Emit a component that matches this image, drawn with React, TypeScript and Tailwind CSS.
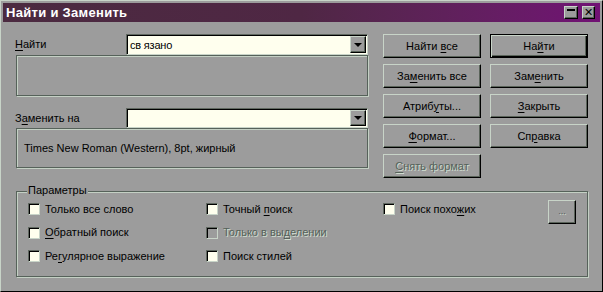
import React from "react";

// Classic "Find & Replace" dialog
const raised =
  "border-t border-l border-t-[#c8d4c8] border-l-[#c8d4c8] border-b border-r border-b-black border-r-black shadow-[inset_-1px_-1px_0_#5a645a]";
const disabledText = "text-[#56625a] [text-shadow:1px_1px_0_#d0dcd0]";

const U = ({ children }: { children: React.ReactNode }) => (
  <span className="underline underline-offset-[2px] decoration-1">{children}</span>
);

const Btn = ({ children, def, disabled }: {
  children: React.ReactNode;
  def?: boolean;
  disabled?: boolean;
}) => (
  <div
    className={`h-[24px] w-[98px] flex items-center justify-center text-[11px] ${
      def
        ? "border border-black shadow-[inset_1px_1px_0_#c8d4c8,inset_-1px_-1px_0_#000,inset_-2px_-2px_0_#5a645a]"
        : raised
    } ${disabled ? disabledText : "text-black"}`}
  >
    <span>{children}</span>
  </div>
);

const Combo = ({ value, h }: { value: string; h: string }) => (
  <div
    className={`${h} flex-1 flex bg-[#ffffee] border-t border-l border-t-[#606860] border-l-[#606860] border-b border-r border-b-[#c8d4c8] border-r-[#c8d4c8] shadow-[inset_1px_1px_0_#000]`}
  >
    <div className="flex-1 pl-[3px] pt-[2px] flex items-center text-[11px] text-black tracking-[-0.2px]">{value}</div>
    <div className={`w-[16px] my-[1px] mr-[1px] flex items-center justify-center bg-[#9c9c9c] ${raised}`}>
      <div className="w-0 h-0 border-l-[4px] border-r-[4px] border-t-[4px] border-l-transparent border-r-transparent border-t-black" />
    </div>
  </div>
);

const boxCls =
  "w-[352px] border border-[#56625a] shadow-[inset_1px_1px_0_#c4d0c4,1px_1px_0_#c4d0c4]";

const Check = ({ children, disabled }: { children: React.ReactNode; disabled?: boolean }) => (
  <div className="flex items-center h-[12px] gap-[5px]">
    <div
      className={`w-[12px] h-[12px] shrink-0 ${disabled ? "bg-[#9c9c9c]" : "bg-[#ffffee]"} border-t border-l border-t-[#606860] border-l-[#606860] border-b border-r border-b-[#c8d4c8] border-r-[#c8d4c8] shadow-[inset_1px_1px_0_#000]`}
    />
    <span className={`text-[11px] leading-none ${disabled ? disabledText : "text-black"}`}>{children}</span>
  </div>
);

export default function App() {
  return (
    <div className="w-[603px] h-[292px] bg-[#9c9c9c] font-['Liberation_Sans',Arial,sans-serif] border border-t-[#c8d4c8] border-l-[#c8d4c8] border-b-black border-r-black p-[2px] overflow-hidden">
      {/* Title bar */}
      <div className="h-[19px] flex items-center justify-between bg-gradient-to-r from-[#4b2a40] via-[#4f2744] to-[#711174] pl-[3px] pr-[5px]">
        <span className="text-white font-bold text-[13px] leading-none tracking-[0.3px]">Найти и Заменить</span>
        <div className="flex gap-[4px] items-center">
          <div className={`w-[14px] h-[13px] bg-[#9c9c9c] ${raised} flex justify-center pt-[2px]`}>
            <div className="w-[8px] h-[2px] bg-black" />
          </div>
          <div className={`w-[13px] h-[13px] bg-[#9c9c9c] ${raised} flex items-center justify-center text-[11px] leading-none text-black`}>
            ✕
          </div>
        </div>
      </div>

      {/* Main row */}
      <div className="flex mt-[12px] pl-[13px]">
        <div className="w-[352px] flex flex-col">
          <div className="flex items-center">
            <span className="w-[111px] -ml-px text-[11px] text-black">
              <U>Н</U>айти
            </span>
            <Combo value="св язано" h="h-[21px]" />
          </div>
          <div className={`${boxCls} h-[41px]`} />
          <div className="flex items-center mt-[12px]">
            <span className="w-[111px] -ml-px text-[11px] text-black">
              З<U>а</U>менить на
            </span>
            <Combo value="" h="h-[20px]" />
          </div>
          <div className={`${boxCls} h-[40px] flex items-center pl-[7px] text-[11px] text-black`}>
            Times New Roman (Western), 8pt, жирный
          </div>
        </div>

        <div className="flex flex-col gap-[6px] ml-[15px]">
          <Btn>Найти <U>в</U>се</Btn>
          <Btn>За<U>м</U>енить все</Btn>
          <Btn>Атриб<U>у</U>ты...</Btn>
          <Btn><U>Ф</U>ормат...</Btn>
          <Btn disabled><U>С</U>нять формат</Btn>
        </div>

        <div className="flex flex-col gap-[6px] ml-[9px]">
          <Btn def>На<U>й</U>ти</Btn>
          <Btn>Зам<U>е</U>нить</Btn>
          <Btn><U>З</U>акрыть</Btn>
          <Btn>Сп<U>р</U>авка</Btn>
        </div>
      </div>

      {/* Options group */}
      <div className="relative mt-[13px] ml-[13px] w-[572px] h-[86px] border border-[#56625a] shadow-[inset_1px_1px_0_#c4d0c4,1px_1px_0_#c4d0c4] flex pt-[8px] pl-[11px] pr-[11px]">
        <span className="absolute -top-[7px] left-[10px] bg-[#9c9c9c] px-[1px] text-[11px] leading-none text-black">
          Параметры
        </span>
        <div className="flex flex-col gap-[11.5px] w-[178px] mt-[3px]">
          <Check>Только все слово</Check>
          <Check><U>О</U>братный поиск</Check>
          <Check>Ре<U>г</U>улярное выражение</Check>
        </div>
        <div className="flex flex-col gap-[11.5px] w-[177px] mt-[3px]">
          <Check>Точный <U>п</U>оиск</Check>
          <Check disabled>Только в вы<U>д</U>елении</Check>
          <Check>Поиск стилей</Check>
        </div>
        <div className="flex flex-col mt-[3px]">
          <Check>Поиск похо<U>ж</U>их</Check>
        </div>
        <div className={`ml-auto w-[28px] h-[24px] ${raised} flex items-center justify-center text-[9px] ${disabledText}`}>
          ...
        </div>
      </div>
    </div>
  );
}
